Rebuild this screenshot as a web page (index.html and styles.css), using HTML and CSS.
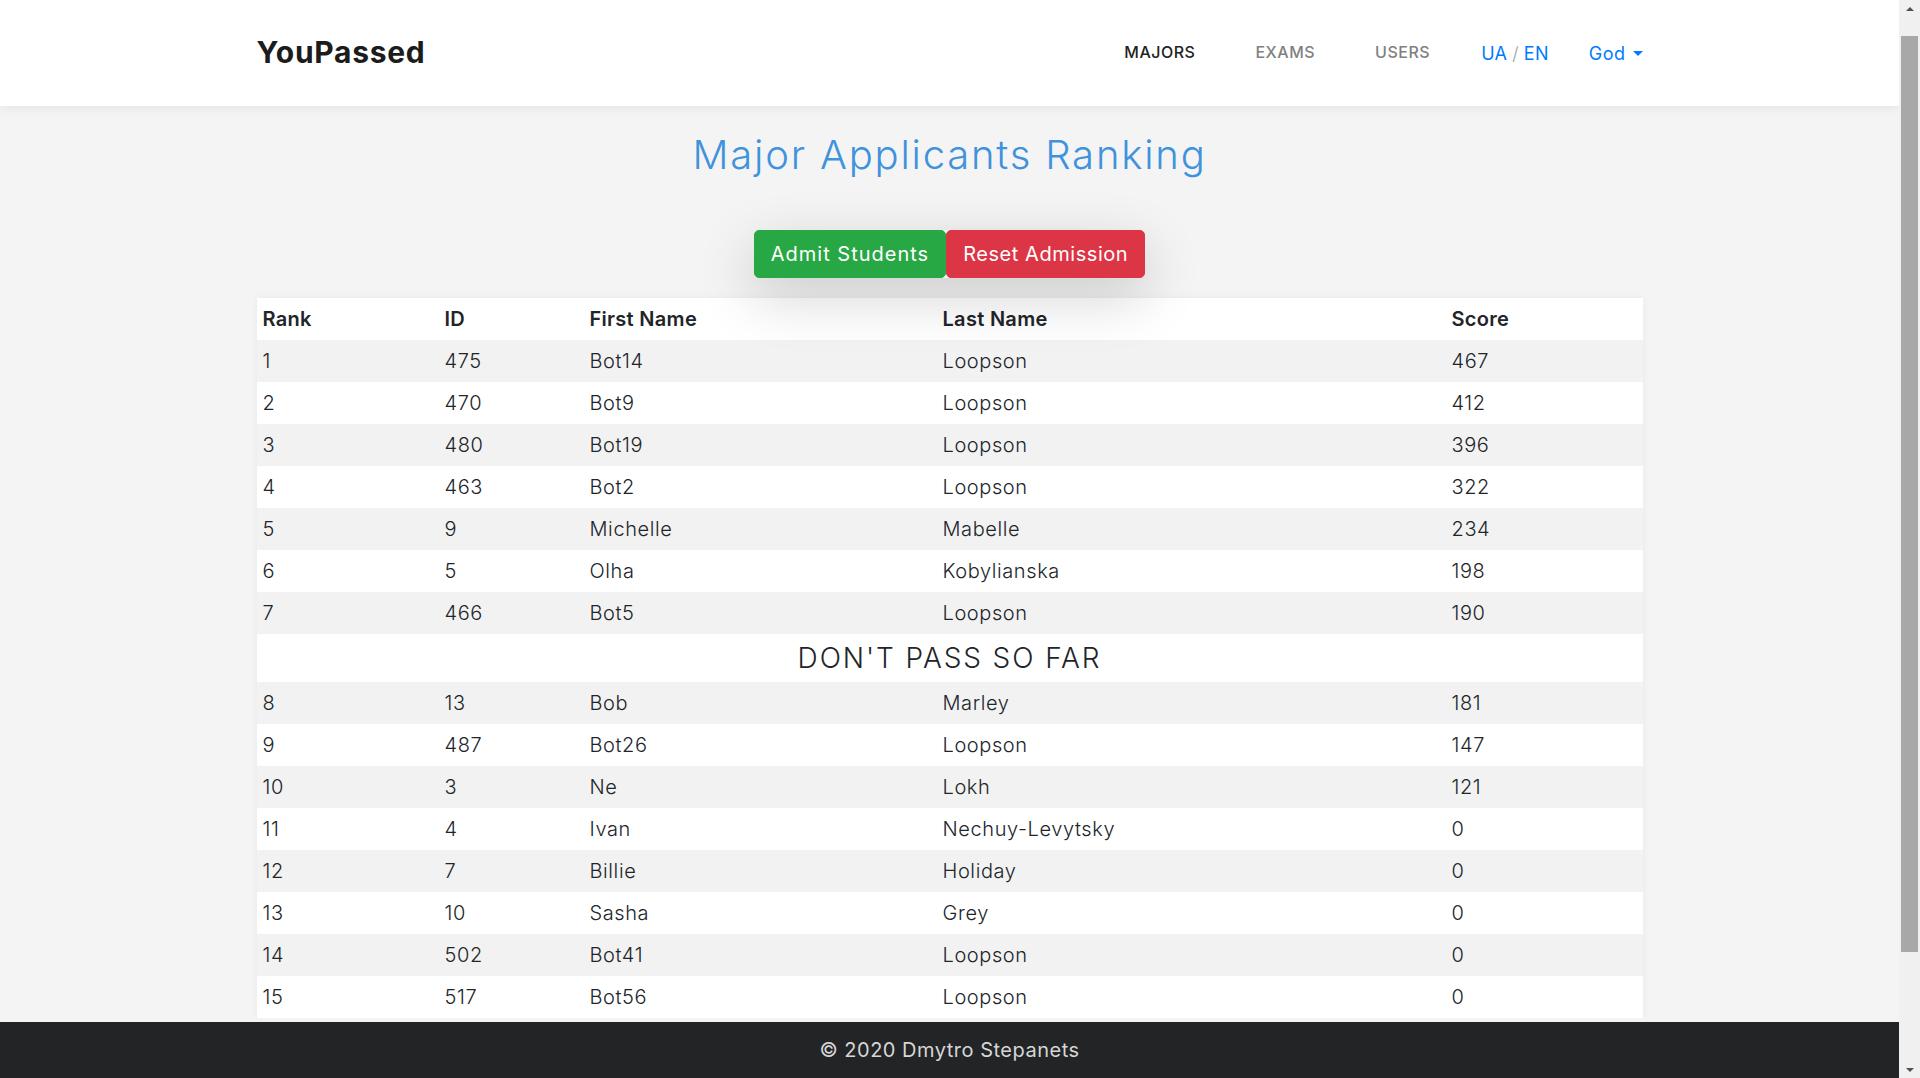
FILE: index.html
```html
<!DOCTYPE html>
<html lang="en">
<head>
<meta charset="utf-8">
<title>YouPassed</title>
<link rel="stylesheet" href="styles.css">
</head>
<body>
<header class="navbar">
  <div class="container nav-inner">
    <a class="brand" href="#">YouPassed</a>
    <nav class="nav">
      <a class="nav-link active" href="#">MAJORS</a>
      <a class="nav-link" href="#">EXAMS</a>
      <a class="nav-link" href="#">USERS</a>
      <span class="lang"><a href="#">UA</a><span class="slash">/</span><a href="#">EN</a></span>
      <a class="user dropdown-toggle" href="#">God</a>
    </nav>
  </div>
</header>

<main class="container main">
  <h1 class="title">Major Applicants Ranking</h1>
  <div class="actions">
    <div class="btn-group">
      <button class="btn btn-success">Admit Students</button>
      <button class="btn btn-danger">Reset Admission</button>
    </div>
  </div>
  <table class="ranking">
    <colgroup>
      <col class="c-rank"><col class="c-id"><col class="c-first"><col class="c-last"><col class="c-score">
    </colgroup>
    <thead>
      <tr><th>Rank</th><th>ID</th><th>First Name</th><th>Last Name</th><th>Score</th></tr>
    </thead>
    <tbody>
      <tr><td>1</td><td>475</td><td>Bot14</td><td>Loopson</td><td>467</td></tr>
      <tr><td>2</td><td>470</td><td>Bot9</td><td>Loopson</td><td>412</td></tr>
      <tr><td>3</td><td>480</td><td>Bot19</td><td>Loopson</td><td>396</td></tr>
      <tr><td>4</td><td>463</td><td>Bot2</td><td>Loopson</td><td>322</td></tr>
      <tr><td>5</td><td>9</td><td>Michelle</td><td>Mabelle</td><td>234</td></tr>
      <tr><td>6</td><td>5</td><td>Olha</td><td>Kobylianska</td><td>198</td></tr>
      <tr><td>7</td><td>466</td><td>Bot5</td><td>Loopson</td><td>190</td></tr>
      <tr class="divider"><td colspan="5">DON'T PASS SO FAR</td></tr>
      <tr><td>8</td><td>13</td><td>Bob</td><td>Marley</td><td>181</td></tr>
      <tr><td>9</td><td>487</td><td>Bot26</td><td>Loopson</td><td>147</td></tr>
      <tr><td>10</td><td>3</td><td>Ne</td><td>Lokh</td><td>121</td></tr>
      <tr><td>11</td><td>4</td><td>Ivan</td><td>Nechuy-Levytsky</td><td>0</td></tr>
      <tr><td>12</td><td>7</td><td>Billie</td><td>Holiday</td><td>0</td></tr>
      <tr><td>13</td><td>10</td><td>Sasha</td><td>Grey</td><td>0</td></tr>
      <tr><td>14</td><td>502</td><td>Bot41</td><td>Loopson</td><td>0</td></tr>
      <tr><td>15</td><td>517</td><td>Bot56</td><td>Loopson</td><td>0</td></tr>
    </tbody>
  </table>
</main>

<footer class="footer">© 2020 Dmytro Stepanets</footer>

<div class="scrollbar" aria-hidden="true">
  <span class="arrow arrow-up"></span>
  <span class="thumb"></span>
  <span class="arrow arrow-down"></span>
</div>
</body>
</html>
```
FILE: styles.css
```css
* { box-sizing: border-box; }
html, body { margin: 0; padding: 0; }
html { overflow: hidden; }
body {
  margin-right: 21px;
  background: #f4f4f4;
  font-family: Inter, "Noto Sans", sans-serif;
  color: #212529;
}
a { text-decoration: none; }

.container {
  width: 1386px;
  margin: 0 auto;
}

/* navbar */
.navbar {
  background: #fff;
  height: 106px;
  box-shadow: 0 2px 10px rgba(0, 0, 0, 0.07);
  position: relative;
  z-index: 2;
}
.nav-inner {
  height: 106px;
  display: flex;
  align-items: center;
  justify-content: space-between;
}
.brand {
  font-size: 30px;
  font-weight: 700;
  color: #1c1c1c;
  letter-spacing: 0.7px;
  padding-bottom: 2px;
}
.nav {
  display: flex;
  align-items: center;
  padding-bottom: 2px;
}
.nav-link {
  font-size: 16px;
  font-weight: 500;
  letter-spacing: 0.5px;
  color: #808080;
  margin-right: 60px;
}
.nav-link.active { color: #222; }
.nav-link:nth-child(3) { margin-right: 51px; }
.lang {
  font-size: 18px;
  font-weight: 400;
  letter-spacing: 0.3px;
  margin-right: 40px;
  padding-top: 2px;
}
.lang a { color: #007bff; }
.slash {
  color: #a0a0a0;
  margin: 0 5px;
  font-weight: 300;
}
.user {
  font-size: 18px;
  color: #007bff;
  letter-spacing: 0.5px;
  padding-top: 2px;
}
.dropdown-toggle::after {
  content: "";
  display: inline-block;
  margin-left: 7px;
  vertical-align: 4px;
  border-top: 5px solid #007bff;
  border-left: 5px solid transparent;
  border-right: 5px solid transparent;
}

/* main */
.main {
  padding-top: 25px;
}
.title {
  margin: 0;
  text-align: center;
  font-size: 40px;
  line-height: 48px;
  font-weight: 300;
  letter-spacing: 1.8px;
  color: #4092dc;
}
.actions {
  display: flex;
  justify-content: center;
  margin-top: 51px;
}
.btn-group {
  position: relative;
  display: flex;
  box-shadow: 0 18px 56px rgba(0, 0, 0, 0.19);
  border-radius: 5px;
}
.btn {
  font-family: inherit;
  font-size: 20px;
  line-height: 30px;
  font-weight: 400;
  padding: 8px 16px;
  border: 1px solid transparent;
  border-radius: 5px;
  color: #fff;
  cursor: pointer;
}
.btn-success { background: #28a745; border-color: #28a745; letter-spacing: 1px; }
.btn-danger { background: #dc3545; border-color: #dc3545; letter-spacing: 0.55px; }

/* table */
.ranking {
  width: 100%;
  margin-top: 20px;
  border-collapse: collapse;
  table-layout: fixed;
  background: #fff;
  box-shadow: 0 0 8px rgba(0, 0, 0, 0.05);
}
.c-rank { width: 182px; }
.c-id { width: 145px; }
.c-first { width: 353px; }
.c-last { width: 509px; }
.c-score { width: 197px; }
.ranking th,
.ranking td {
  padding: 6px;
  font-size: 20px;
  line-height: 30px;
  text-align: left;
  vertical-align: top;
}
.ranking th {
  font-weight: 600;
  letter-spacing: 0.3px;
  color: #212529;
}
.ranking td {
  font-weight: 300;
  letter-spacing: 0.6px;
  color: #212529;
}
.ranking tbody tr:nth-child(odd) { background: #f2f2f2; }
.ranking .divider td {
  text-align: center;
  font-size: 28px;
  line-height: 36px;
  letter-spacing: 1.9px;
  font-weight: 300;
}

/* footer */
.footer {
  position: fixed;
  left: 0;
  right: 21px;
  bottom: 0;
  height: 56px;
  background: #222426;
  color: #d6d6d6;
  font-size: 20px;
  line-height: 56px;
  letter-spacing: 0.5px;
  text-align: center;
  z-index: 3;
}

/* window scrollbar (drawn, since the capture hides the native one) */
.scrollbar {
  position: fixed;
  top: 0;
  right: 0;
  bottom: 0;
  width: 21px;
  background: #f0f0f0;
  display: flex;
  flex-direction: column;
  align-items: center;
  z-index: 4;
}
.arrow {
  width: 21px;
  height: 17px;
  display: flex;
  align-items: center;
  justify-content: center;
}
.arrow::before {
  content: "";
  border-left: 4px solid transparent;
  border-right: 4px solid transparent;
}
.arrow-up::before { border-bottom: 4px solid #505050; }
.arrow-down { margin-top: auto; }
.arrow-down::before { border-top: 4px solid #505050; }
.thumb {
  width: 17px;
  height: 916px;
  margin-top: 19px;
  background: #a8a8a8;
}
```
